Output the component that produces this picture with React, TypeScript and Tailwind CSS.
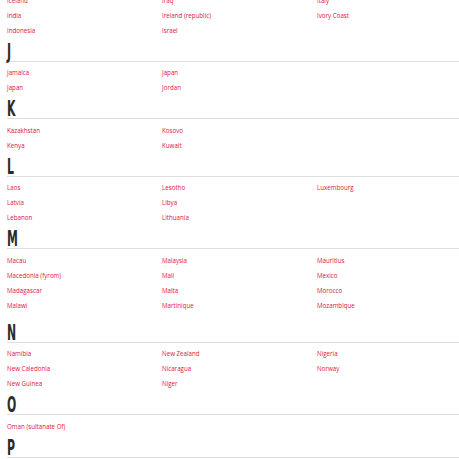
import React from "react"

type Section = {
  letter?: string
  items: string[][]
  extra?: boolean
}

const sections: Section[] = [
  {
    items: [
      ["Iceland", "Iraq", "Italy"],
      ["India", "Ireland (republic)", "Ivory Coast"],
      ["Indonesia", "Israel", ""],
    ],
  },
  { letter: "J", items: [["Jamaica", "Japan", ""], ["Japan", "Jordan", ""]] },
  { letter: "K", items: [["Kazakhstan", "Kosovo", ""], ["Kenya", "Kuwait", ""]] },
  {
    letter: "L",
    items: [
      ["Laos", "Lesotho", "Luxembourg"],
      ["Latvia", "Libya", ""],
      ["Lebanon", "Lithuania", ""],
    ],
  },
  {
    letter: "M",
    extra: true,
    items: [
      ["Macau", "Malaysia", "Mauritius"],
      ["Macedonia (fyrom)", "Mali", "Mexico"],
      ["Madagascar", "Malta", "Morocco"],
      ["Malawi", "Martinique", "Mozambique"],
    ],
  },
  {
    letter: "N",
    items: [
      ["Namibia", "New Zealand", "Nigeria"],
      ["New Caledonia", "Nicaragua", "Norway"],
      ["New Guinea", "Niger", ""],
    ],
  },
  { letter: "O", items: [["Oman (sultanate Of)", "", ""]] },
  { letter: "P", items: [] },
]

function CountryGroup({ section, first }: { section: Section; first: boolean }) {
  return (
    <div className={section.extra ? "mb-[6px]" : ""}>
      {section.letter && (
        <div className="h-[24px] border-b border-[#dedede] flex items-end overflow-visible">
          <span
            className="inline-block origin-bottom-left scale-x-[0.55] text-[22px] leading-none font-bold text-[#2b2b2b] translate-y-[2px]"
            style={{ fontFamily: '"DejaVu Sans Condensed", "DejaVu Sans", sans-serif' }}
          >
            {section.letter}
          </span>
        </div>
      )}
      {section.items.length > 0 && (
        <div className={`grid grid-cols-[155px_155px_155px] ${first ? "-mt-[7.5px]" : "pt-[3.5px]"}`}>
          {section.items.map((row, i) =>
            row.map((name, j) => (
              <div key={`${i}-${j}`} className="h-[15px] leading-[15px] text-[6.2px] text-[#e0143c] whitespace-nowrap">
                {name}
              </div>
            ))
          )}
        </div>
      )}
    </div>
  )
}

export default function App() {
  return (
    <div
      className="w-[459px] h-[459px] overflow-hidden bg-white pl-[7px]"
      style={{ fontFamily: '"Open Sans", "Liberation Sans", sans-serif' }}
    >
      {sections.map((s, i) => (
        <CountryGroup key={i} section={s} first={i === 0} />
      ))}
    </div>
  )
}
